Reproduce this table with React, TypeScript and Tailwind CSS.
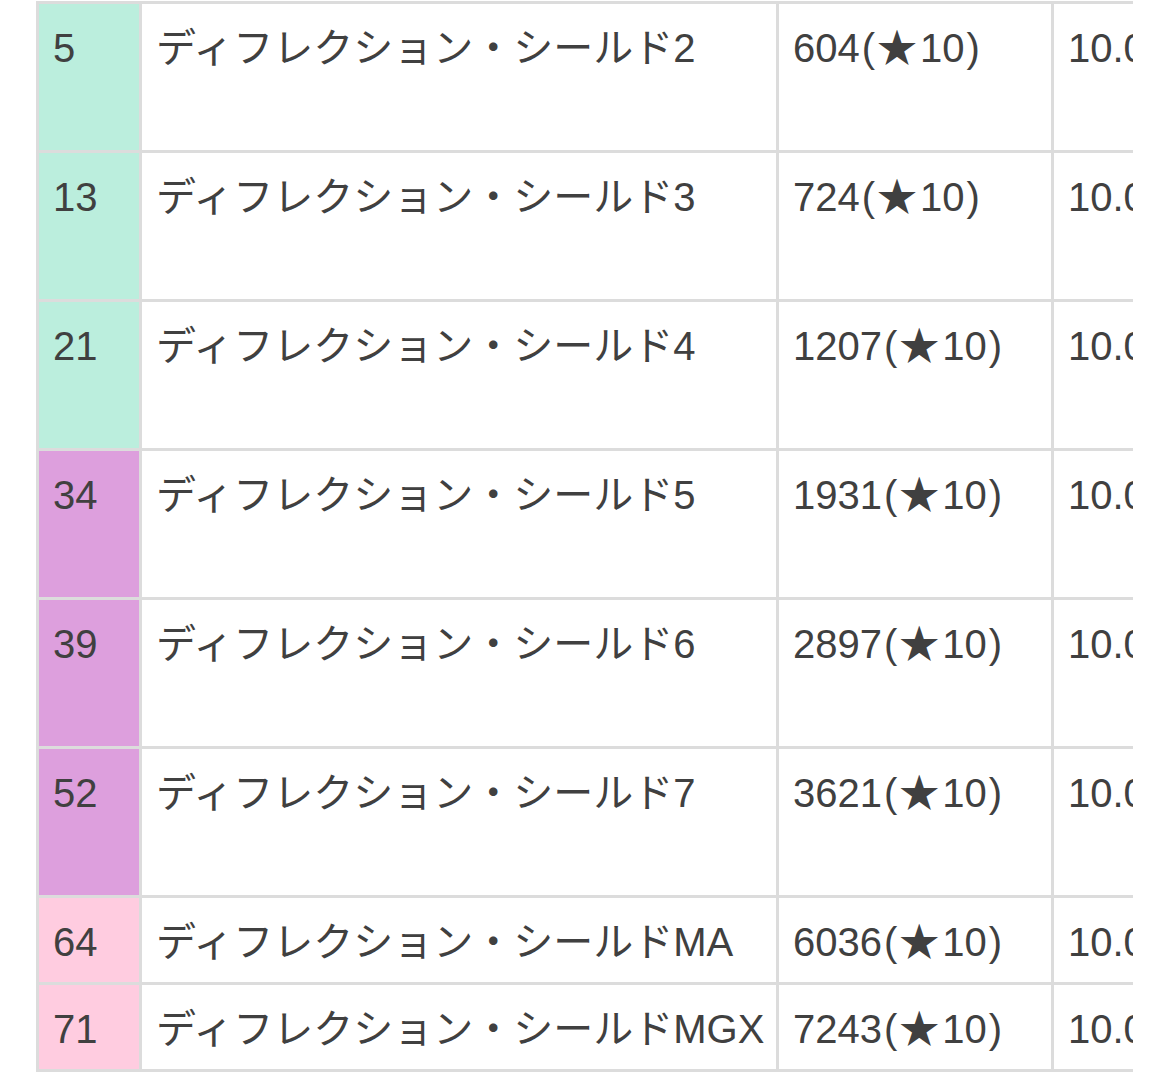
import React from "react";

type Row = {
  lv: string;
  tone: "teal" | "plum" | "pink";
  suffix: string;
  power: string;
  short?: boolean;
};

const rows: Row[] = [
  { lv: "5", tone: "teal", suffix: "2", power: "604" },
  { lv: "13", tone: "teal", suffix: "3", power: "724" },
  { lv: "21", tone: "teal", suffix: "4", power: "1207" },
  { lv: "34", tone: "plum", suffix: "5", power: "1931" },
  { lv: "39", tone: "plum", suffix: "6", power: "2897" },
  { lv: "52", tone: "plum", suffix: "7", power: "3621" },
  { lv: "64", tone: "pink", suffix: "MA", power: "6036", short: true },
  { lv: "71", tone: "pink", suffix: "MGX", power: "7243", short: true },
];

const toneClass = {
  teal: "bg-[#bbeedd]",
  plum: "bg-[#dd9fdd]",
  pink: "bg-[#ffcce0]",
} as const;

export default function App() {
  return (
    <div
      className="h-[1072px] w-full overflow-hidden bg-white text-[#404040]"
      style={{ fontFamily: '"Liberation Sans", "Noto Sans CJK JP", sans-serif' }}
    >
      <div className="ml-[36px] mt-[1px] w-[1097px] overflow-hidden">
        <div className="grid w-max grid-cols-[100px_634px_272px_300px] gap-[3px] bg-[#dcdcdc] p-[3px] text-[40px] leading-[60px]">
          {rows.map((r) => {
            const h = r.short ? "h-[84px]" : "h-[146px]";
            const cell = `${h} whitespace-nowrap px-[14px] pt-[14px]`;
            return (
              <React.Fragment key={r.lv}>
                <div className={`${cell} ${toneClass[r.tone]}`}>{r.lv}</div>
                <div className={`${cell} bg-white`}>ディフレクション・シールド{r.suffix}</div>
                <div className={`${cell} bg-white`}>
                  {r.power}
                  <span className="mx-[2px]">(</span>
                  <span className="mr-[3px]">★</span>10
                  <span className="ml-[2px]">)</span>
                </div>
                <div className={`${cell} bg-white`}>10.0%</div>
              </React.Fragment>
            );
          })}
          {/* next row, mostly cut off */}
          <div className="h-[40px] bg-[#f7eed8]" />
          <div className="h-[40px] bg-white" />
          <div className="h-[40px] bg-white" />
          <div className="h-[40px] bg-white" />
        </div>
      </div>
    </div>
  );
}
